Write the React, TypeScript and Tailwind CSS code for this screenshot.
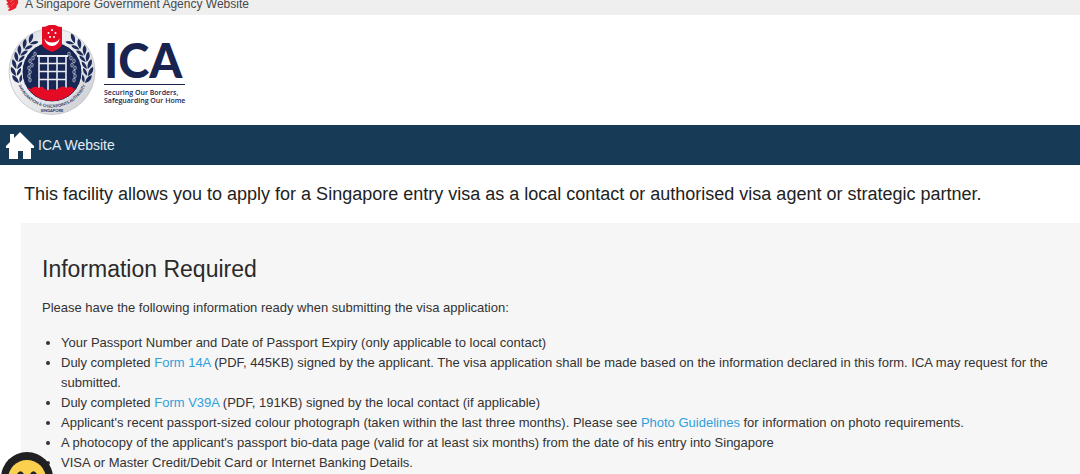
import type { ReactNode } from "react";

// ── Constants ─────────────────────────────────────────────────────────────────

const LINK = "text-[#2f9fdb] hover:underline";

// Leaf pairs of the left laurel branch, mirrored for the right one
const LEAVES: { x: number; y: number; angle: number }[] = [
  { x: 10, y: 53, angle: -12 },
  { x: 8, y: 46, angle: 0 },
  { x: 9, y: 39, angle: 8 },
  { x: 11, y: 32, angle: 18 },
  { x: 14, y: 26, angle: 28 },
  { x: 19, y: 20, angle: 38 },
  { x: 25, y: 15, angle: 48 },
];

const CHAIN: [number, number][] = [
  [27, 29],
  [25, 33],
  [22, 36],
  [24, 40],
  [21, 43],
  [22, 47],
  [21, 51],
  [22, 55],
];

// ── Drawings ──────────────────────────────────────────────────────────────────

function Laurel() {
  return (
    <g fill="#1d2c5b">
      {LEAVES.map((l) => (
        <g key={l.y} transform={`translate(${l.x} ${l.y}) rotate(${l.angle})`}>
          <path d="M0 5 C-4 3 -6 0 -5 -4 C-2 -3 0 0 0 5Z" />
          <path d="M0.800 5 C0.500 1 2 -2 5 -3 C5.500 0 4 3 0.800 5Z" />
        </g>
      ))}
    </g>
  );
}

function Chain() {
  return (
    <g fill="none" stroke="#c3cad8" strokeWidth="0.8">
      {CHAIN.map(([x, y]) => (
        <ellipse key={y} cx={x} cy={y} rx="1.2" ry="2" />
      ))}
    </g>
  );
}

function Emblem() {
  return (
    <svg viewBox="0 0 88 92" className="h-[92px] w-[88px] shrink-0" role="img" aria-label="ICA crest">
      <defs>
        <linearGradient id="rim" x1="0" y1="0" x2="1" y2="1">
          <stop offset="0" stopColor="#c6c8cc" />
          <stop offset="0.3" stopColor="#f1f2f4" />
          <stop offset="0.65" stopColor="#e2e4e7" />
          <stop offset="1" stopColor="#c4c6ca" />
        </linearGradient>
        <clipPath id="disc">
          <circle cx="44" cy="47" r="29" />
        </clipPath>
        <path id="motto" d="M9.500 58 A36.500 36.500 0 0 0 78.500 58" />
      </defs>
      <circle cx="44" cy="46.500" r="43" fill="url(#rim)" stroke="#c0c3c8" strokeWidth="0.8" />
      <Laurel />
      <g transform="translate(88 0) scale(-1 1)">
        <Laurel />
      </g>
      <circle cx="44" cy="47" r="30" fill="#182653" stroke="#eceef1" strokeWidth="1" />
      <g clipPath="url(#disc)">
        <Chain />
        <g transform="translate(88 0) scale(-1 1)">
          <Chain />
        </g>
        <g stroke="#e9edf3" fill="none">
          <path d="M29 31 H60" strokeWidth="2" />
          <path d="M31 31 V65 M58 31 V65" strokeWidth="1.600" />
          <path d="M40 32 V65 M49 32 V65" strokeWidth="1.600" />
          <path d="M31 38.500 H58 M31 46.500 H58 M31 54.500 H58" strokeWidth="1.500" />
        </g>
        <path
          d="M12 65 Q18 61 23 64 Q26 60 31 63 Q34 60 37 64 Q40 66 44 64 Q48 66 51 63 Q55 60 59 63 Q63 60 66 64 Q71 61 76 65 V80 H12Z"
          fill="#e50b24"
        />
      </g>
      <path d="M34 2 Q38 2 41 0 H47 Q50 2 54 2 V19 Q54 23 44 27 Q34 23 34 19Z" fill="#e50b24" />
      <path d="M36.500 13.500 A7.500 7.500 0 0 0 51.500 13.500 A8 6 0 0 1 36.500 13.500Z" fill="#fff" />
      <g fill="#fff">
        <circle cx="44" cy="5" r="1" />
        <circle cx="40.500" cy="8" r="1" />
        <circle cx="47.500" cy="8" r="1" />
        <circle cx="42" cy="12" r="1" />
        <circle cx="46" cy="12" r="1" />
      </g>
      <text fill="#1d2c5b" fontFamily="Lato, sans-serif" fontSize="4" fontWeight="700">
        <textPath href="#motto" startOffset="50%" textAnchor="middle">
          IMMIGRATION &amp; CHECKPOINTS AUTHORITY
        </textPath>
      </text>
      <text x="44" y="87" textAnchor="middle" fill="#1d2c5b" fontFamily="Lato, sans-serif" fontSize="4" fontWeight="700">
        SINGAPORE
      </text>
    </svg>
  );
}

function LionIcon() {
  return (
    <svg viewBox="0 0 14 12" className="h-3 w-3.5 shrink-0" aria-hidden="true">
      <path d="M1 0 H13 Q14 3 12 5 L11 8 Q8 10 4 11 L3 10 L5 8 L2 7 L4 6 L1 4 L3 3Z" fill="#e8202a" />
      <path d="M5 2 L8 0 M6 6 L9 3" stroke="#f5a5a5" strokeWidth="0.5" />
    </svg>
  );
}

function HomeIcon() {
  return (
    <svg viewBox="0 0 28 28" className="size-7 shrink-0" aria-hidden="true">
      <path d="M14 1 L28 15 V17 H25 V28 H17 V20 H12 V28 H3 V17 H0 V15 L4 11 V3 H8 V7Z" fill="#fff" />
    </svg>
  );
}

function ChatButton() {
  return (
    <button type="button" aria-label="Open chat assistant" className="fixed bottom-0 left-0">
      <svg viewBox="0 0 54 22" className="h-[22px] w-[54px]" aria-hidden="true">
        <circle cx="27" cy="26" r="26" fill="#202022" />
        <circle cx="27" cy="27" r="19" fill="#fbd04f" />
        <path d="M18 23 Q20.500 18 23 23 M31 23 Q33.500 18 36 23" fill="none" stroke="#202022" strokeWidth="2.500" />
      </svg>
    </button>
  );
}

// ── Content ───────────────────────────────────────────────────────────────────

const REQUIREMENTS: { id: string; content: ReactNode }[] = [
  {
    id: "passport",
    content: "Your Passport Number and Date of Passport Expiry (only applicable to local contact)",
  },
  {
    id: "form-14a",
    content: (
      <>
        Duly completed <a href="#form-14a" className={LINK}>Form 14A</a> (PDF, 445KB) signed by the applicant. The visa
        application shall be made based on the information declared in this form. ICA may request for the submitted.
      </>
    ),
  },
  {
    id: "form-v39a",
    content: (
      <>
        Duly completed <a href="#form-v39a" className={LINK}>Form V39A</a> (PDF, 191KB) signed by the local contact (if
        applicable)
      </>
    ),
  },
  {
    id: "photo",
    content: (
      <>
        Applicant's recent passport-sized colour photograph (taken within the last three months). Please see{" "}
        <a href="#photo" className={LINK}>Photo Guidelines</a> for information on photo requirements.
      </>
    ),
  },
  {
    id: "biodata",
    content:
      "A photocopy of the applicant's passport bio-data page (valid for at least six months) from the date of his entry into Singapore",
  },
  { id: "payment", content: "VISA or Master Credit/Debit Card or Internet Banking Details." },
];

export default function App() {
  return (
    <div className="h-screen overflow-hidden bg-white font-['Liberation_Sans',Arial,sans-serif] text-[13px] text-[#333]">
      {/* Government banner */}
      <div className="flex h-[15px] items-start gap-1.5 bg-[#efefef] pl-[5px]">
        <LionIcon />
        <span className="text-xs leading-[8px] text-[#484848]">A Singapore Government Agency Website</span>
      </div>

      {/* Logo */}
      <header className="flex h-[110px] items-start gap-2 pt-2.5 pl-2">
        <Emblem />
        <div className="pt-[11px] font-[Lato,sans-serif] text-[#19234f]">
          <div className="text-[47px] leading-[48px] font-black">ICA</div>
          <div className="border-t border-[#19234f] pt-1 font-['Open_Sans',sans-serif] text-[7px] leading-[8px] font-semibold">
            Securing Our Borders,
            <br />
            Safeguarding Our Home
          </div>
        </div>
      </header>

      <nav className="flex h-10 items-center bg-[#173a57] pl-1.5">
        <a href="#home" className="flex items-center gap-1 text-sm text-[#e3edf5]">
          <HomeIcon />
          ICA Website
        </a>
      </nav>

      <main className="pl-[21px]">
        <h1 className="pt-[17px] pb-[17px] pl-[3px] text-lg leading-6 text-[#222]">
          This facility allows you to apply for a Singapore entry visa as a local contact or authorised visa agent or
          strategic partner.
        </h1>

        <section className="bg-[#f6f6f6] pt-8 pb-6 pl-[21px]">
          <h2 className="text-[23px] leading-7 text-[#2a2a2a]">Information Required</h2>
          <p className="mt-[15px] leading-5">
            Please have the following information ready when submitting the visa application:
          </p>
          <ul className="mt-[15px] list-disc pl-[19px] leading-5">
            {REQUIREMENTS.map((r) => (
              <li key={r.id}>{r.content}</li>
            ))}
          </ul>
        </section>
      </main>

      <ChatButton />
    </div>
  );
}
